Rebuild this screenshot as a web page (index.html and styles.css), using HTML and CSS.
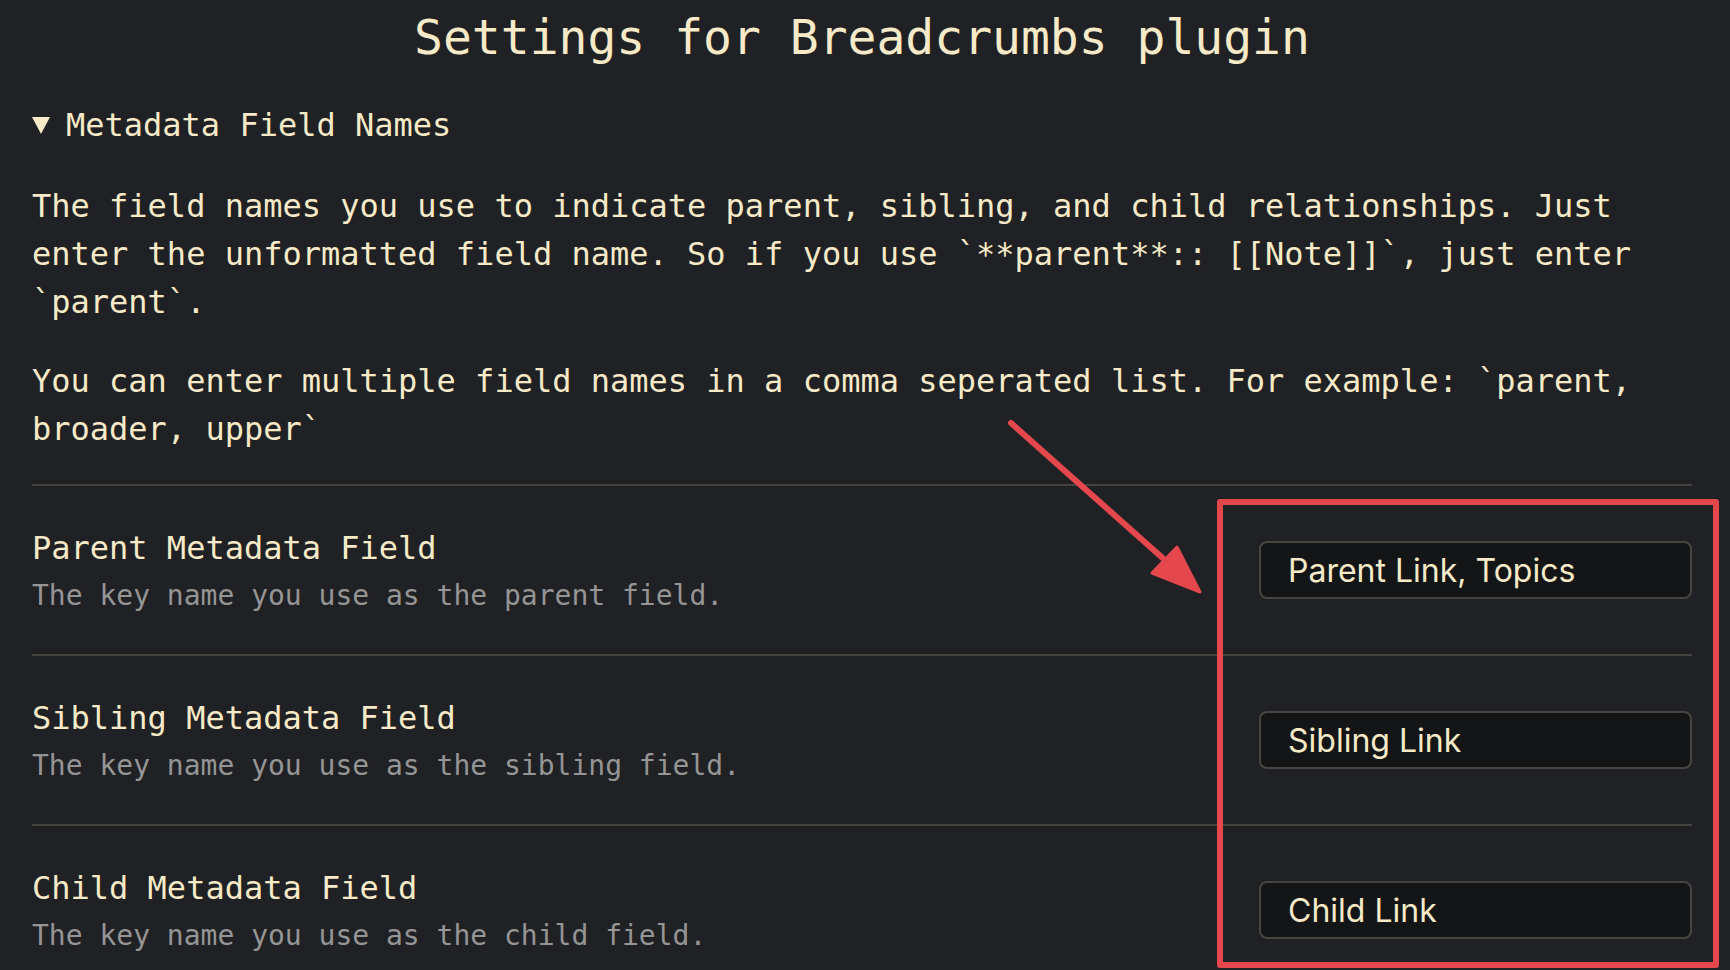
FILE: index.html
```html
<!DOCTYPE html>
<html lang="en">
<head>
<meta charset="utf-8">
<title>Settings for Breadcrumbs plugin</title>
<link rel="stylesheet" href="styles.css">
</head>
<body>
<main class="page">
  <h1 class="title">Settings for Breadcrumbs plugin</h1>
  <div class="section">
    <div class="summary"><span class="caret"></span><span>Metadata Field Names</span></div>
    <p class="para first">The field names you use to indicate parent, sibling, and child relationships. Just enter the unformatted field name. So if you use `**parent**:: [[Note]]`, just enter `parent`.</p>
    <p class="para">You can enter multiple field names in a comma seperated list. For example: `parent, broader, upper`</p>
    <div class="settings">
      <div class="row">
        <div class="info">
          <div class="name">Parent Metadata Field</div>
          <div class="desc">The key name you use as the parent field.</div>
        </div>
        <div class="input">Parent Link, Topics</div>
      </div>
      <div class="row">
        <div class="info">
          <div class="name">Sibling Metadata Field</div>
          <div class="desc">The key name you use as the sibling field.</div>
        </div>
        <div class="input">Sibling Link</div>
      </div>
      <div class="row">
        <div class="info">
          <div class="name">Child Metadata Field</div>
          <div class="desc">The key name you use as the child field.</div>
        </div>
        <div class="input">Child Link</div>
      </div>
    </div>
  </div>
</main>
<div class="highlight"></div>
<svg class="arrow" width="1730" height="970" viewBox="0 0 1730 970" xmlns="http://www.w3.org/2000/svg">
  <line x1="1011" y1="423" x2="1166" y2="561" stroke="#e4474c" stroke-width="6" stroke-linecap="round"/>
  <polygon points="1200,592 1152,573 1177,547" fill="#e4474c" stroke="#e4474c" stroke-width="3" stroke-linejoin="round"/>
</svg>
</body>
</html>
```

FILE: styles.css
```css
html, body {
  margin: 0;
  padding: 0;
  background: #202124;
  width: 1730px;
  height: 970px;
  overflow: hidden;
}

body {
  position: relative;
  font-family: "DejaVu Sans Mono", "Liberation Mono", monospace;
  color: #f6eac8;
}

.page {
  padding: 5px 38px 0 32px;
}

.title {
  margin: 0;
  font-size: 48px;
  font-weight: normal;
  line-height: 64px;
  text-align: center;
}

.section {
  margin-top: 32px;
}

.summary {
  display: flex;
  align-items: center;
  font-size: 32px;
  line-height: 48px;
}

.caret {
  width: 0;
  height: 0;
  border-left: 9.75px solid transparent;
  border-right: 9.75px solid transparent;
  border-top: 17px solid #f6eac8;
  margin-right: 16px;
}

.para {
  margin: 31px 0 0;
  font-size: 32px;
  line-height: 48px;
}

.para.first {
  margin-top: 33px;
}

.settings {
  margin-top: 31px;
}

.row {
  border-top: 2px solid #46433f;
  height: 168px;
  display: flex;
  align-items: center;
  justify-content: space-between;
}

.info {
  display: flex;
  flex-direction: column;
  gap: 8px;
  padding-top: 4px;
}

.name {
  font-size: 32px;
  line-height: 40px;
}

.desc {
  font-size: 28px;
  line-height: 40px;
  color: #959595;
}

.input {
  box-sizing: border-box;
  width: 433px;
  height: 58px;
  border: 2px solid #48443f;
  border-radius: 8px;
  background: #141517;
  padding-left: 27px;
  display: flex;
  align-items: center;
  font-family: Inter, "Noto Sans", sans-serif;
  font-size: 32px;
  color: #f6eac8;
}

.highlight {
  position: absolute;
  left: 1217px;
  top: 499px;
  width: 490px;
  height: 457px;
  border: 6px solid #e4474c;
  border-radius: 3px;
}

.arrow {
  position: absolute;
  left: 0;
  top: 0;
  pointer-events: none;
}
```
